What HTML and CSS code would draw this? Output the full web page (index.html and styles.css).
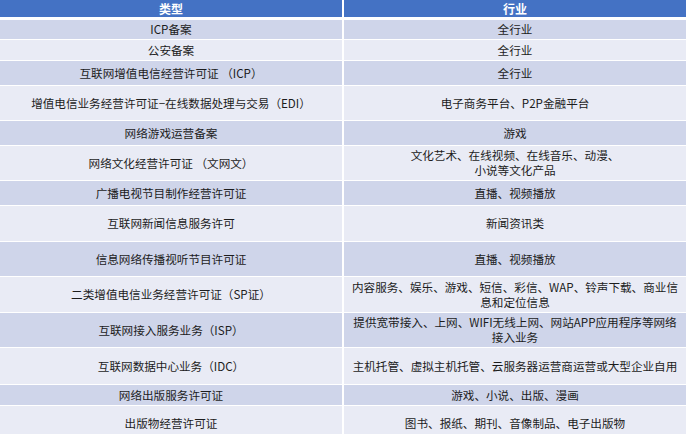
FILE: index.html
```html
<!DOCTYPE html>
<html lang="zh">
<head>
<meta charset="utf-8">
<link rel="stylesheet" href="styles.css">
</head>
<body>
<div class="table">
  <div class="row head"><div class="cell">类型</div><div class="cell">行业</div></div>
  <div class="row dark h19"><div class="cell">ICP备案</div><div class="cell">全行业</div></div>
  <div class="row light h20"><div class="cell">公安备案</div><div class="cell">全行业</div></div>
  <div class="row dark h24"><div class="cell">互联网增值电信经营许可证 （ICP）</div><div class="cell">全行业</div></div>
  <div class="row light h34"><div class="cell">增值电信业务经营许可证−在线数据处理与交易（EDI）</div><div class="cell">电子商务平台、P2P金融平台</div></div>
  <div class="row dark h24"><div class="cell">网络游戏运营备案</div><div class="cell">游戏</div></div>
  <div class="row light h34"><div class="cell">网络文化经营许可证 （文网文）</div><div class="cell">文化艺术、在线视频、在线音乐、动漫、<br>小说等文化产品</div></div>
  <div class="row dark h24"><div class="cell">广播电视节目制作经营许可证</div><div class="cell">直播、视频播放</div></div>
  <div class="row light h35"><div class="cell">互联网新闻信息服务许可</div><div class="cell">新闻资讯类</div></div>
  <div class="row dark h34"><div class="cell">信息网络传播视听节目许可证</div><div class="cell">直播、视频播放</div></div>
  <div class="row light h35"><div class="cell">二类增值电信业务经营许可证（SP证）</div><div class="cell">内容服务、娱乐、游戏、短信、彩信、WAP、铃声下载、商业信息和定位信息</div></div>
  <div class="row dark h34"><div class="cell">互联网接入服务业务（ISP）</div><div class="cell">提供宽带接入、上网、WIFI无线上网、网站APP应用程序等网络接入业务</div></div>
  <div class="row light h36"><div class="cell">互联网数据中心业务（IDC）</div><div class="cell">主机托管、虚拟主机托管、云服务器运营商运营或大型企业自用</div></div>
  <div class="row dark h20"><div class="cell">网络出版服务许可证</div><div class="cell">游戏、小说、出版、漫画</div></div>
  <div class="row light h34"><div class="cell">出版物经营许可证</div><div class="cell">图书、报纸、期刊、音像制品、电子出版物</div></div>
</div>
</body>
</html>
```
FILE: styles.css
```css
html, body {
  margin: 0;
  padding: 0;
  background: #ffffff;
}
body {
  width: 688px;
  height: 434px;
  overflow: hidden;
  font-family: "Noto Sans CJK SC", "Noto Sans", sans-serif;
  font-size: 11.6px;
  color: #1c1c1c;
}
.table {
  display: flex;
  flex-direction: column;
  gap: 1px;
  width: 686px;
  padding-right: 2px;
}
.row {
  display: grid;
  grid-template-columns: 342px 342px;
  column-gap: 2px;
}
.cell {
  display: flex;
  align-items: center;
  justify-content: center;
  text-align: center;
  padding: 0 4px;
  line-height: 15px;
}
.head {
  height: 17px;
  margin-bottom: 2px;
}
.head .cell {
  background: #4472c4;
  color: #ffffff;
  font-weight: bold;
  font-size: 12px;
}
.dark .cell { background: #cfd5ea; }
.light .cell { background: #e9ebf5; }
.h19 { height: 19px; }
.h20 { height: 20px; }
.h24 { height: 24px; }
.h34 { height: 34px; }
.h35 { height: 35px; }
.h36 { height: 36px; }
```
